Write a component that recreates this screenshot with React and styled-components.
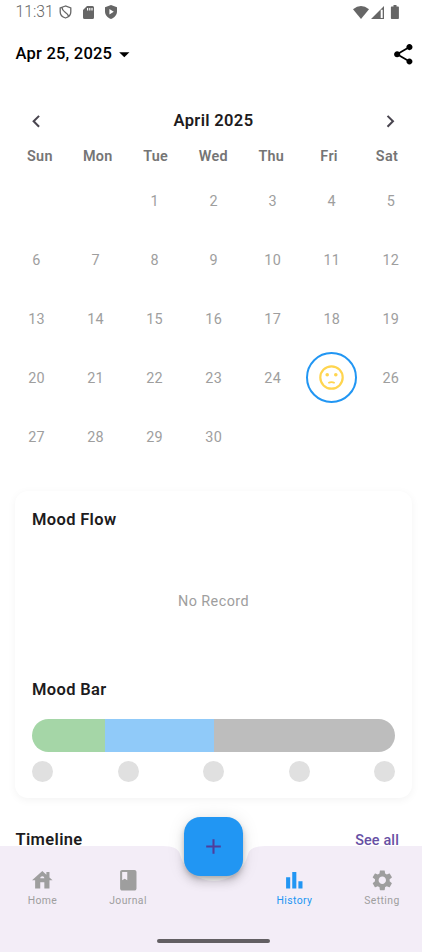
import React from "react";
import styled, { createGlobalStyle } from "styled-components";

const GlobalStyle = createGlobalStyle`
  * { box-sizing: border-box; }
  body { margin: 0; background: #fff; }
`;

const Screen = styled.main`
  position: relative;
  display: flex;
  flex-direction: column;
  width: 422px;
  height: 952px;
  overflow: hidden;
  background: #fff;
  color: #1d1b20;
  font-family: Roboto, "Liberation Sans", sans-serif;
`;

const Icon = styled.svg`
  display: block;
  flex: none;
  width: ${(p) => p.$w}px;
  height: ${(p) => p.$h || p.$w}px;
  fill: currentColor;
`;

const StatusBar = styled.div`
  display: flex;
  align-items: center;
  height: 24px;
  padding: 0 21px 0 15.5px;
  color: #666;
`;

const Clock = styled.span`
  width: 37px;
  margin-right: 6px;
  font-size: 15.7px;
  font-weight: 300;
  line-height: 24px;
  white-space: nowrap;
`;

const StatusIcons = styled.div`
  display: flex;
  align-items: center;
  gap: ${(p) => p.$gap}px;
  margin-left: ${(p) => (p.$end ? "auto" : "0")};
`;

const Header = styled.header`
  display: flex;
  align-items: center;
  justify-content: space-between;
  height: 60px;
  padding: 0 6px 0 15.5px;
  color: #000;
`;

const DateButton = styled.button`
  display: flex;
  align-items: center;
  padding: 0;
  border: 0;
  background: none;
  color: inherit;
  font: 500 16.5px/24px Roboto, sans-serif;
  letter-spacing: 0.22px;
`;

const IconButton = styled.button`
  display: flex;
  padding: 0;
  border: 0;
  background: none;
  color: ${(p) => p.$color || "inherit"};
`;

const Content = styled.div`
  height: 762px;
  overflow: hidden;
`;

const MonthBar = styled.div`
  display: flex;
  align-items: center;
  justify-content: space-between;
  height: 24px;
  margin: 25px 19px 0 24px;
`;

const Title = styled.h2`
  margin: 0;
  font-size: 16.5px;
  font-weight: 600;
  line-height: 24px;
  letter-spacing: 0.34px;
`;

const Weekdays = styled.div`
  display: grid;
  grid-template-columns: repeat(7, 57.85px);
  margin: 14px 0 0 11px;
  color: #757575;
  font-size: 14.4px;
  font-weight: 600;
  line-height: 20px;
  letter-spacing: 0.3px;
  text-align: center;
`;

const Days = styled.div`
  display: grid;
  grid-template-columns: repeat(7, 59.05px);
  grid-auto-rows: 59.05px;
  margin: 4px 0 0 7px;
`;

const Day = styled.div`
  display: flex;
  align-items: center;
  justify-content: center;
  padding-top: ${(p) => (p.$mood ? 0 : 2)}px;
  color: #9e9e9e;
  font-size: 14.4px;
  letter-spacing: 0.25px;
`;

const MoodRing = styled.div`
  display: flex;
  align-items: center;
  justify-content: center;
  width: 51px;
  height: 51px;
  border: 2px solid #2196f3;
  border-radius: 50%;
  color: #ffd54f;
`;

const Card = styled.section`
  height: 307px;
  margin: 25px 10px 0 15px;
  padding: 17px 17px 0 17px;
  border-radius: 13px;
  background: #fff;
  box-shadow: 0 2px 8px rgba(0, 0, 0, 0.05);
`;

const EmptyFlow = styled.div`
  display: flex;
  align-items: center;
  justify-content: center;
  height: 146px;
  padding-bottom: 8px;
  color: #9e9e9e;
  font-size: 14.4px;
  letter-spacing: 0.42px;
`;

const Bar = styled.div`
  display: flex;
  height: 33px;
  margin-top: 17px;
  border-radius: 17px;
  overflow: hidden;
`;

const Segment = styled.div`
  flex: ${(p) => p.$share};
  background: ${(p) => p.$color};
`;

const Dots = styled.div`
  display: flex;
  justify-content: space-between;
  margin-top: 8.5px;
`;

const Dot = styled.div`
  width: 21px;
  height: 21px;
  border-radius: 50%;
  background: #e0e0e0;
`;

const TimelineHeader = styled.div`
  display: flex;
  justify-content: space-between;
  margin: 30px 23px 0 15.5px;
`;

const SeeAll = styled.a`
  color: #6750a4;
  font-size: 14.4px;
  font-weight: 500;
  line-height: 25px;
  letter-spacing: 0.15px;
`;

const BottomNav = styled.nav`
  position: relative;
  display: flex;
  flex-direction: column;
  align-items: center;
  height: 106px;
  background: #f3edf7;
`;

const Notch = styled(Icon)`
  position: absolute;
  top: 0;
  left: 161.5px;
  color: #fff;
`;

const AddButton = styled.button`
  position: absolute;
  top: -29px;
  left: 184px;
  display: flex;
  align-items: center;
  justify-content: center;
  width: 59px;
  height: 58.5px;
  padding: 0;
  border: 0;
  border-radius: 16.5px;
  background: #2196f3;
  color: #4f3d9c;
  box-shadow: 0 3px 5px -1px rgba(0, 0, 0, 0.2), 0 6px 10px rgba(0, 0, 0, 0.14),
    0 1px 18px rgba(0, 0, 0, 0.1);
`;

const Tabs = styled.div`
  display: flex;
  width: 100%;
  height: 92.500px;
  padding-top: 22px;
`;

const Tab = styled.a`
  display: flex;
  flex: none;
  flex-direction: column;
  align-items: center;
  width: ${(p) => p.$width}px;
  margin-left: ${(p) => p.$gap || 0}px;
  color: ${(p) => (p.$active ? "#2196f3" : "#9e9e9e")};
  font-size: 10.4px;
  line-height: 14px;
  letter-spacing: 0.4px;
  gap: 1px;
`;

const HomeIndicator = styled.div`
  width: 113px;
  height: 4px;
  margin-left: 5px;
  border-radius: 2px;
  background: #625f63;
`;

const weekdays = ["Sun", "Mon", "Tue", "Wed", "Thu", "Fri", "Sat"];
const cells = [null, null, ...Array.from({ length: 30 }, (_, i) => i + 1)];

const paths = {
  home: "M19 9.3V4h-3v2.6L12 3 2 12h3v8h5v-6h4v6h5v-8h3l-3-2.7zm-9 .7c0-1.1.9-2 2-2s2 .9 2 2h-4z",
  book: "M18 2H6c-1.1 0-2 .9-2 2v16c0 1.1.9 2 2 2h12c1.1 0 2-.9 2-2V4c0-1.1-.9-2-2-2zM6 4h5v8l-2.5-1.5L6 12V4z",
  chart: "M4 9h4v11H4zm12 4h4v7h-4zm-6-9h4v16h-4z",
  gear: "M19.14 12.94c.04-.3.06-.61.06-.94 0-.32-.02-.64-.07-.94l2.03-1.58c.18-.14.23-.41.12-.61l-1.92-3.32c-.12-.22-.37-.29-.59-.22l-2.39.96c-.5-.38-1.03-.7-1.62-.94l-.36-2.54c-.04-.24-.24-.41-.48-.41h-3.84c-.24 0-.43.17-.47.41l-.36 2.54c-.59.24-1.13.57-1.62.94l-2.39-.96c-.22-.08-.47 0-.59.22L2.74 8.87c-.12.21-.08.47.12.61l2.03 1.58c-.05.3-.09.63-.09.94s.02.64.07.94l-2.03 1.58c-.18.14-.23.41-.12.61l1.92 3.32c.12.22.37.29.59.22l2.39-.96c.5.38 1.03.7 1.62.94l.36 2.54c.05.24.24.41.48.41h3.84c.24 0 .44-.17.47-.41l.36-2.54c.59-.24 1.13-.56 1.62-.94l2.39.96c.22.08.47 0 .59-.22l1.92-3.32c.12-.22.07-.47-.12-.61l-2.01-1.58zM12 15.6c-1.98 0-3.6-1.62-3.6-3.6s1.62-3.6 3.6-3.6 3.6 1.62 3.6 3.6-1.62 3.6-3.6 3.6z",
  left: "M15.41 7.41 14 6l-6 6 6 6 1.41-1.41L10.83 12z",
  right: "M10 6 8.59 7.41 13.17 12l-4.58 4.59L10 18l6-6z",
  down: "M7 10l5 5 5-5z",
  share: "M18 16.08c-.76 0-1.44.3-1.96.77L8.91 12.7c.05-.23.09-.46.09-.7s-.04-.47-.09-.7l7.05-4.11c.54.5 1.25.81 2.04.81 1.66 0 3-1.34 3-3s-1.34-3-3-3-3 1.34-3 3c0 .24.04.47.09.7L8.04 9.81C7.5 9.31 6.79 9 6 9c-1.66 0-3 1.34-3 3s1.34 3 3 3c.79 0 1.5-.31 2.04-.81l7.12 4.16c-.05.21-.08.43-.08.65 0 1.61 1.31 2.92 2.92 2.92s2.92-1.31 2.92-2.92-1.31-2.92-2.92-2.92z",
};

const Glyph = ({ name, size = 24.6 }) => (
  <Icon $w={size} viewBox="0 0 24 24">
    <path d={paths[name]} />
  </Icon>
);

const tabs = [
  { label: "Home", icon: "home", width: 85 },
  { label: "Journal", icon: "book", width: 86 },
  { label: "History", icon: "chart", width: 87, gap: 80, active: true },
  { label: "Setting", icon: "gear", width: 80, gap: 4 },
];

export default function App() {
  return (
    <Screen>
      <GlobalStyle />
      <StatusBar>
        <Clock>11:31</Clock>
        <StatusIcons $gap={11}>
          <Icon $w={13} $h={14} viewBox="0 0 13 14">
            <path d="M6.5 1 1.2 3v4c0 2.900 2.200 5.100 5.300 6 3.100-.9 5.300-3.100 5.300-6V3zM3 2.600C3.200 7 8 7 9.600 11.200" fill="none" stroke="currentColor" strokeWidth="1.300" />
          </Icon>
          <Icon $w={11} $h={13} viewBox="0 0 11 13">
            <path fillRule="evenodd" d="M4 0h5.500Q11 0 11 1.500v10Q11 13 9.500 13h-8Q0 13 0 11.500V4zM4 2v2.500h1.200V2zm2.200 0v2.500h1.200V2zm2.200 0v2.500h1.200V2z" />
          </Icon>
          <Icon $w={12} $h={14} viewBox="0 0 12 14">
            <path fillRule="evenodd" d="M6 0l6 2.300v4.200C12 10 9.500 12.800 6 14 2.500 12.800 0 10 0 6.500V2.300zM4.400 4v5.400L8.800 6.700z" />
          </Icon>
        </StatusIcons>
        <StatusIcons $end $gap={2}>
          <Icon $w={16} $h={13} viewBox="0 0 16 13">
            <path d="M8 13 0 3.200Q8-3 16 3.200z" />
          </Icon>
          <Icon $w={13} $h={13} viewBox="0 0 13 13">
            <path fillRule="evenodd" d="M13 0v13H0zM9.700 3.800v8.200h2V3.800z" />
          </Icon>
          <Icon $w={15} $h={14} viewBox="0 0 15 14">
            <path d="M7.500 0h3v1.500h1.700q.7 0 .7.700v11q0 .8-.8.8H5.700q-.8 0-.8-.8v-11q0-.7.700-.7h1.900z" />
          </Icon>
        </StatusIcons>
      </StatusBar>
      <Header>
        <DateButton>
          Apr 25, 2025
          <Glyph name="down" />
        </DateButton>
        <IconButton aria-label="Share">
          <Glyph name="share" />
        </IconButton>
      </Header>
      <Content>
        <MonthBar>
          <IconButton aria-label="Previous month" $color="#49454f">
            <Glyph name="left" />
          </IconButton>
          <Title>April 2025</Title>
          <IconButton aria-label="Next month" $color="#49454f">
            <Glyph name="right" />
          </IconButton>
        </MonthBar>
        <Weekdays>
          {weekdays.map((d) => (
            <span key={d}>{d}</span>
          ))}
        </Weekdays>
        <Days>
          {cells.map((d, i) => (
            <Day key={i} $mood={d === 25}>
              {d === 25 ? (
                <MoodRing>
                  <Icon $w={25} viewBox="0 0 25 25">
                    <circle cx="12.500" cy="12.500" r="11.200" fill="none" stroke="currentColor" strokeWidth="2.200" />
                    <circle cx="8.200" cy="9.700" r="1.800" />
                    <circle cx="16.800" cy="9.700" r="1.800" />
                    <path d="M9.300 18q3.200-1.800 6.400 0" fill="none" stroke="currentColor" strokeWidth="1.700" />
                  </Icon>
                </MoodRing>
              ) : (
                d
              )}
            </Day>
          ))}
        </Days>
        <Card>
          <Title>Mood Flow</Title>
          <EmptyFlow>No Record</EmptyFlow>
          <Title>Mood Bar</Title>
          <Bar>
            <Segment $share={2} $color="#a5d6a7" />
            <Segment $share={3} $color="#90caf9" />
            <Segment $share={5} $color="#bdbdbd" />
          </Bar>
          <Dots>
            {[0, 1, 2, 3, 4].map((i) => (
              <Dot key={i} />
            ))}
          </Dots>
        </Card>
        <TimelineHeader>
          <Title>Timeline</Title>
          <SeeAll>See all</SeeAll>
        </TimelineHeader>
      </Content>
      <BottomNav>
        <Notch $w={104} $h={37} viewBox="-52 0 104 37">
          <path d="M-51 0Q-36 0-34 8.300A35 35 0 0 0 34 8.300Q36 0 51 0z" />
        </Notch>
        <Tabs>
          {tabs.map((t) => (
            <Tab key={t.label} $width={t.width} $gap={t.gap} $active={t.active}>
              <Glyph name={t.icon} />
              {t.label}
            </Tab>
          ))}
        </Tabs>
        <HomeIndicator />
        <AddButton aria-label="Add">
          <Icon $w={25} viewBox="0 0 24 24">
            <path d="M19 13h-6v6h-2v-6H5v-2h6V5h2v6h6z" />
          </Icon>
        </AddButton>
      </BottomNav>
    </Screen>
  );
}
